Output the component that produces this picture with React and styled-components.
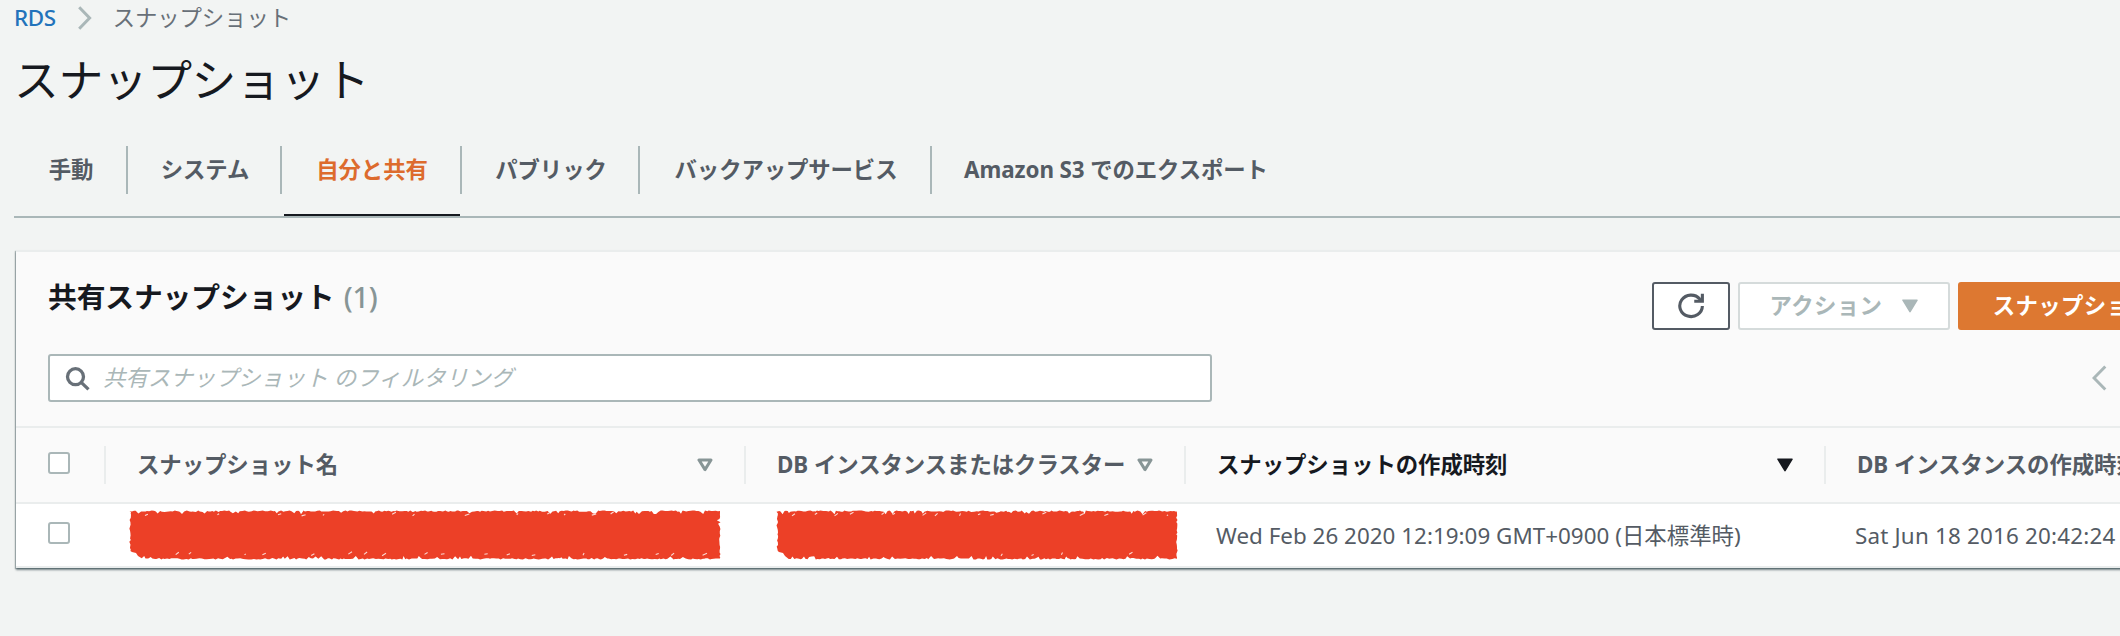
import { useState } from "react";
import styled, { createGlobalStyle, css } from "styled-components";

const GlobalStyle = createGlobalStyle`
    * {
        box-sizing: border-box;
    }
    html, body {
        margin: 0;
        padding: 0;
        overflow: hidden;
        background: #f2f4f3;
    }
    body {
        font-family: "Noto Sans", "Noto Sans CJK JP", sans-serif;
        font-size: 22.4px;
        line-height: 32px;
        color: #545b64;
    }
`;

const Viewport = styled.div`
    width: 100%;
    height: 636px;
    overflow: hidden;
`;

const Page = styled.main`
    width: 2420px;
    height: 636px;
    padding-left: 14px;
    background: #f2f4f3;
`;

const Breadcrumb = styled.nav`
    display: flex;
    align-items: center;
    height: 36px;
    color: #687078;
    letter-spacing: -0.1px;

    svg {
        margin: 0 21px 0 22px;
    }
`;

const BreadcrumbLink = styled.a`
    color: #2273bb;
    font-weight: 500;
    letter-spacing: -0.4px;
    text-decoration: none;
`;

const Title = styled.h1`
    margin: 12px 0 0;
    height: 64px;
    font-size: 44.8px;
    font-weight: 400;
    line-height: 64px;
    letter-spacing: -0.4px;
    color: #16191f;
`;

const Tabs = styled.div`
    display: flex;
    height: 106px;
    padding-top: 34px;
    border-bottom: 2px solid #aab7b8;
`;

const Tab = styled.button`
    display: flex;
    flex-direction: column;
    justify-content: space-between;
    width: ${(props) => props.$width}px;
    height: 70px;
    padding: 0;
    border: none;
    background: transparent;
    color: ${(props) => (props.$active ? "#dd6b2d" : "#545b64")};
    font: inherit;
    font-weight: 700;
    letter-spacing: -0.1px;
    white-space: nowrap;

    &::after {
        content: "";
        height: 2px;
        width: calc(100% - 4px);
        margin-left: 2px;
        background: ${(props) => (props.$active ? "#16191f" : "transparent")};
    }
`;

const TabLabel = styled.span`
    display: flex;
    align-items: center;
    justify-content: center;
    width: 100%;
    height: 48px;
    padding-left: 2px;
    border-right: ${(props) => (props.$last ? "none" : "2px solid #aab7b8")};
`;

const Card = styled.section`
    margin: 32px 0 0 2px;
    background: #fff;
    border-top: 2px solid #eaeded;
    box-shadow: 0 2px 2px 0 rgba(0, 28, 36, 0.5), -1px 1px 1px 0 rgba(0, 28, 36, 0.25);
`;

const CardHeader = styled.header`
    height: 174px;
    padding: 30px 0 0 32px;
    background: #fafafa;
`;

const HeaderTop = styled.div`
    display: flex;
    height: 48px;
`;

const Heading = styled.h2`
    width: 1604px;
    margin: -3px 0 0;
    font-size: 28.8px;
    line-height: 35px;
    letter-spacing: -0.15px;
    color: #16191f;
`;

const Count = styled.span`
    margin-left: 2px;
    color: #879596;
    font-weight: 500;
    letter-spacing: -0.3px;
`;

const Actions = styled.div`
    display: flex;
    gap: 8px;
`;

const buttonKinds = {
    normal: css`
        background: #fff;
        border-color: #545b64;
        color: #545b64;
    `,
    disabled: css`
        background: #fff;
        border-color: #d5dbdb;
        color: #aab7b8;
    `,
    primary: css`
        background: #dd7831;
        border-color: #dd7831;
        color: #fff;
    `,
};

const Button = styled.button`
    display: flex;
    align-items: center;
    justify-content: center;
    gap: 20px;
    height: 48px;
    width: ${(props) => props.$width}px;
    padding: 0;
    border: 2px solid;
    border-radius: 3px;
    font: inherit;
    font-weight: 700;
    letter-spacing: 0.4px;
    white-space: nowrap;
    ${(props) => buttonKinds[props.$kind]}
`;

const HeaderBottom = styled.div`
    display: flex;
    align-items: center;
    height: 48px;
    margin-top: 24px;
`;

const SearchBox = styled.label`
    display: flex;
    align-items: center;
    width: 1164px;
    height: 48px;
    padding-left: 15px;
    border: 2px solid #aab7b8;
    border-radius: 3px;
    background: #fff;
`;

const SearchInput = styled.input`
    flex: 1;
    margin-left: 13px;
    padding: 0;
    border: none;
    outline: none;
    background: transparent;
    font: inherit;
    letter-spacing: 0.1px;

    &::placeholder {
        color: #aab7b8;
        font-style: italic;
        opacity: 1;
    }
`;

const PageButton = styled.button`
    display: flex;
    margin-left: 880px;
    padding: 0;
    border: none;
    background: transparent;
`;

const Row = styled.div`
    display: grid;
    grid-template-columns: 90px 640px 440px 640px 1fr;
    align-items: center;
    height: ${(props) => (props.$head ? 78 : 64)}px;
    background: ${(props) => (props.$head ? "#fafafa" : "#fff")};
    border-top: ${(props) => (props.$head ? "2px solid #eaeded" : "none")};
    border-bottom: 2px solid #eaeded;
`;

const CheckCell = styled.div`
    display: flex;
    align-items: center;
    height: 38px;
    padding: 0 32px 4px;
    border-right: ${(props) => (props.$head ? "2px solid #eaeded" : "none")};
`;

const Checkbox = styled.input`
    appearance: none;
    flex: none;
    width: 22px;
    height: 22px;
    margin: 0;
    border: 2px solid #aab7b8;
    border-radius: 3px;
    background: #fff;
`;

const HeadCell = styled.div`
    display: flex;
    align-items: center;
    justify-content: space-between;
    height: 38px;
    padding: 0 31px 0 31px;
    border-right: 2px solid #eaeded;
    color: ${(props) => (props.$sorted ? "#16191f" : "#545b64")};
    font-weight: 700;
    letter-spacing: -0.05px;
    white-space: nowrap;
`;

const Cell = styled.div`
    padding: 1px 0 0 ${(props) => (props.$wide ? 29 : 30)}px;
    letter-spacing: ${(props) => (props.$wide ? "0.2px" : "0.02px")};
    white-space: nowrap;
`;

const MarkerCell = styled.div`
    display: flex;
    padding-left: ${(props) => props.$indent}px;
`;

const BreadcrumbArrow = () => (
    <svg width="14" height="24" viewBox="0 0 14 24" fill="none" stroke="#aab7b8" strokeWidth="3">
        <path d="M1.2 1.2 11.6 12 1.2 22.8" />
    </svg>
);

const PrevArrow = () => (
    <svg width="15" height="26" viewBox="0 0 15 26" fill="none" stroke="#aab7b8" strokeWidth="3">
        <path d="M13.3 1.5 2 13l11.3 11.5" />
    </svg>
);

const RefreshIcon = () => (
    <svg width="26" height="26" viewBox="0 0 16 16" fill="none" stroke="#545b64" strokeWidth="1.9">
        <path d="M10 5.1h5V.4" />
        <path d="M15 8a6.95 6.6 0 1 1-1.6-4.3L14.8 5" />
    </svg>
);

const SearchIcon = () => (
    <svg width="25" height="25" viewBox="0 0 25 25" fill="none" stroke="#687078" strokeWidth="3.3">
        <circle cx="10.5" cy="10.7" r="8" />
        <path d="m16.2 16.4 7.3 7" />
    </svg>
);

const Caret = ({ filled, color }) => (
    <svg width="16" height="14" viewBox="0 0 16 14" fill={filled ? color : "none"} stroke={color} strokeLinejoin="round">
        {filled
            ? <path d="M1 1.2h14L8 12.6z" strokeWidth="1.6" />
            : <path d="M2 2h12L8 11.6z" strokeWidth="3" />}
    </svg>
);

// ragged outline of a rough marker stroke, the same on every render
const roughEdge = (width, height, seed) => {
    let s = seed;
    const rnd = () => {
        s = (s * 16807) % 2147483647;
        return s / 2147483647;
    };
    const jag = () => (rnd() > 0.93 ? 2.8 : 0.4) + rnd() * 1.5;
    const points = [];
    for (let x = 0.5; x < width - 1; x += 1.2 + rnd() * 1.8) points.push([x, jag()]);
    for (let y = 1; y < height - 1; y += 1.2 + rnd() * 1.8) points.push([width - jag(), y]);
    for (let x = width - 1; x > 12; x -= 1.2 + rnd() * 1.8) points.push([x, height - jag()]);
    points.push([9, height - 4], [7, height - 7], [3, height - 8]);
    for (let y = height - 9; y > 1; y -= 1.2 + rnd() * 1.8) points.push([0.3 + rnd() * 1.8, y]);

    const flecks = [];
    for (let x = 16; x < width - 8; x += 8 + rnd() * 24) {
        const y = rnd() > 0.5 ? 4 + rnd() * 2 : height - 4 - rnd() * 2;
        flecks.push(`M${x.toFixed(1)} ${y.toFixed(1)}l${(1 + rnd() * 4).toFixed(1)} ${(-0.5 - rnd() * 2).toFixed(1)}`);
    }
    return {
        outline: points.map(([x, y]) => `${x.toFixed(1)},${y.toFixed(1)}`).join(" "),
        flecks: flecks.join(""),
    };
};

const Marker = ({ width, height, seed }) => {
    const { outline, flecks } = roughEdge(width, height, seed);
    return (
        <svg width={width} height={height}>
            <polygon points={outline} fill="#ec4027" />
            <path d={flecks} stroke="#fbd9d3" strokeWidth="1.1" />
        </svg>
    );
};

const tabs = [
    { title: "手動", width: 114 },
    { title: "システム", width: 154 },
    { title: "自分と共有", width: 180 },
    { title: "パブリック", width: 178 },
    { title: "バックアップサービス", width: 292 },
    { title: "Amazon S3 でのエクスポート", width: 366 },
];

const columns = [
    { title: "スナップショット名" },
    { title: "DB インスタンスまたはクラスター" },
    { title: "スナップショットの作成時刻", sorted: true },
    { title: "DB インスタンスの作成時刻" },
];

const App = () => {
    const [tab, setTab] = useState(2);

    return (
        <Viewport>
            <GlobalStyle />
            <Page>
                <Breadcrumb>
                    <BreadcrumbLink href="#">RDS</BreadcrumbLink>
                    <BreadcrumbArrow />
                    <span>スナップショット</span>
                </Breadcrumb>
                <Title>スナップショット</Title>
                <Tabs>
                    {tabs.map((item, index) => (
                        <Tab key={item.title} $width={item.width} $active={index === tab} onClick={() => setTab(index)}>
                            <TabLabel $last={index === tabs.length - 1}>{item.title}</TabLabel>
                        </Tab>
                    ))}
                </Tabs>

                <Card>
                    <CardHeader>
                        <HeaderTop>
                            <Heading>共有スナップショット <Count>(1)</Count></Heading>
                            <Actions>
                                <Button $kind="normal" $width={78}><RefreshIcon /></Button>
                                <Button $kind="disabled" $width={212}>
                                    アクション
                                    <Caret filled color="#aab7b8" />
                                </Button>
                                <Button $kind="primary" $width={320}>スナップショットの取得</Button>
                            </Actions>
                        </HeaderTop>
                        <HeaderBottom>
                            <SearchBox>
                                <SearchIcon />
                                <SearchInput placeholder="共有スナップショット のフィルタリング" />
                            </SearchBox>
                            <PageButton><PrevArrow /></PageButton>
                        </HeaderBottom>
                    </CardHeader>

                    <Row $head>
                        <CheckCell $head><Checkbox type="checkbox" /></CheckCell>
                        {columns.map((column) => (
                            <HeadCell key={column.title} $sorted={column.sorted}>
                                {column.title}
                                <Caret filled={column.sorted} color={column.sorted ? "#16191f" : "#879596"} />
                            </HeadCell>
                        ))}
                    </Row>
                    <Row>
                        <CheckCell><Checkbox type="checkbox" /></CheckCell>
                        <MarkerCell $indent={23}><Marker width={592} height={50} seed={71} /></MarkerCell>
                        <MarkerCell $indent={30}><Marker width={402} height={50} seed={4211} /></MarkerCell>
                        <Cell>Wed Feb 26 2020 12:19:09 GMT+0900 (日本標準時)</Cell>
                        <Cell $wide>Sat Jun 18 2016 20:42:24 GMT+0900 (日本標準時)</Cell>
                    </Row>
                </Card>
            </Page>
        </Viewport>
    );
};

export default App;
